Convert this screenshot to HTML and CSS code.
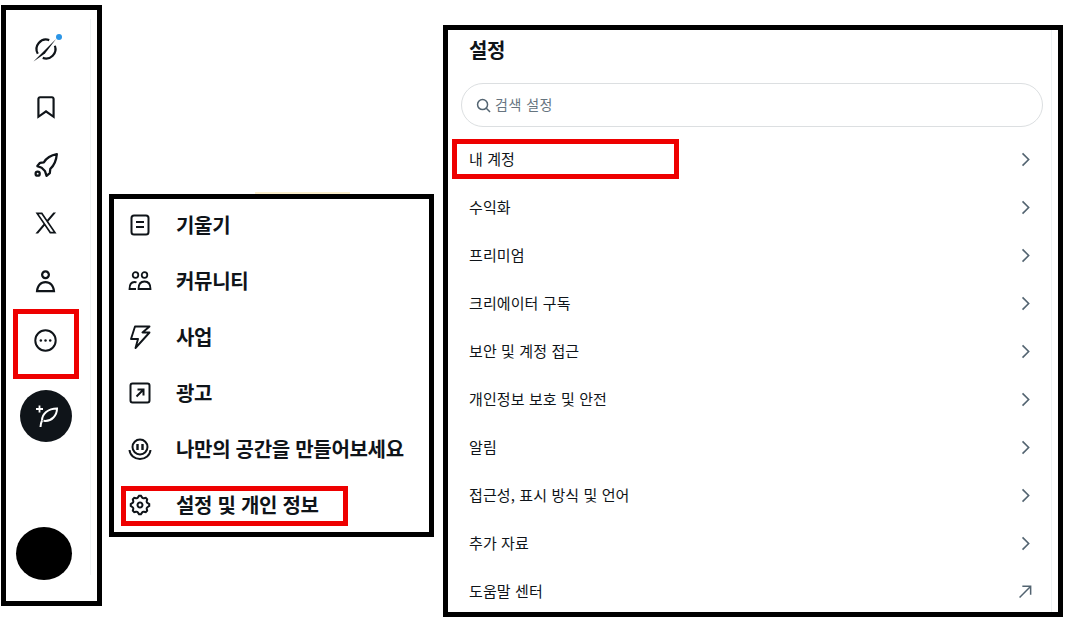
FILE: index.html
```html
<!DOCTYPE html>
<html lang="ko">
<head>
  <meta charset="UTF-8" />
  <title>설정</title>
  <link rel="stylesheet" href="styles.css">
</head>
<body>
  <div class="page">

    <nav class="panel rail-panel">
      <div class="rail">
        <div class="rail-item">
          <svg viewBox="0 0 32 32" width="32" height="32" fill="none" stroke="#0f1419" stroke-width="2.200">
            <path d="M24.900 13.750A9.500 9.500 0 0 1 12.750 25.900"/>
            <path d="M7.800 21.750A9.500 9.500 0 0 1 19.250 8.100"/>
            <path d="M3.500 29.500L26 7 15 21.500z" fill="#0f1419" stroke="none"/>
            <circle cx="29" cy="5" r="3" fill="#2b95e6" stroke="none"/>
          </svg>
        </div>
        <div class="rail-item">
          <svg viewBox="0 0 24 24" width="26" height="26" fill="#0f1419"><path d="M4 4.500C4 3.120 5.120 2 6.500 2h11C18.880 2 20 3.120 20 4.500v18.440l-8-5.710-8 5.710V4.500zM6.500 4c-.276 0-.5.220-.5.500v14.560l6-4.290 6 4.290V4.500c0-.280-.224-.5-.5-.5h-11z"/></svg>
        </div>
        <div class="rail-item">
          <svg viewBox="0 0 24 24" width="26" height="26" fill="none" stroke="#0f1419" stroke-width="2.100" stroke-linejoin="round">
            <path d="M22 2c-5.500 1-9.500 3.500-12 7.500L6.500 10 4 13l4 1.500 3 3L12.500 22l3-2.500.5-4C19.500 12.500 21.500 7.500 22 2z"/>
            <circle cx="4.300" cy="20" r="1.900"/>
          </svg>
        </div>
        <div class="rail-item">
          <svg viewBox="0 0 24 24" width="26" height="26" fill="#0f1419"><path d="M21.742 21.750l-7.563-11.179 7.056-8.321h-2.456l-5.691 6.714-4.540-6.714H2.359l7.290 10.776L2.250 21.750h2.456l6.035-7.118 4.818 7.118h6.191-.008zM7.739 3.818L18.810 20.182h-2.447L5.290 3.818h2.447z"/></svg>
        </div>
        <div class="rail-item">
          <svg viewBox="0 0 24 24" width="27" height="27" fill="#0f1419"><path d="M5.651 19.500h12.698c-.337-1.800-1.023-3.210-1.945-4.190C15.318 14.160 13.838 13.500 12 13.500s-3.317.660-4.404 1.810c-.922.980-1.608 2.390-1.945 4.190zm.486-5.560C7.627 12.360 9.648 11.500 12 11.500s4.373.860 5.863 2.440c1.477 1.580 2.366 3.800 2.632 6.460l.110 1.100H3.395l.110-1.100c.266-2.660 1.155-4.880 2.632-6.460zM12 4c-1.105 0-2 .900-2 2s.895 2 2 2 2-.900 2-2-.895-2-2-2zM8 6c0-2.210 1.791-4 4-4s4 1.790 4 4-1.791 4-4 4-4-1.790-4-4z"/></svg>
        </div>
        <div class="rail-item">
          <svg viewBox="0 0 24 24" width="25" height="25" fill="#0f1419">
            <circle cx="12" cy="12" r="9.800" fill="none" stroke="#0f1419" stroke-width="1.900"/>
            <circle cx="7.500" cy="12" r="1.200"/><circle cx="12" cy="12" r="1.200"/><circle cx="16.500" cy="12" r="1.200"/>
          </svg>
          <span class="mark mark-more"></span>
        </div>
        <div class="compose">
          <svg viewBox="0 0 24 24" width="24" height="24" fill="none" stroke="#fff" stroke-width="2">
            <path d="M8 16.500C8 10 14 4.500 23 4.500 23 11 18 18 9.500 16.800"/>
            <path d="M6.500 23C6.800 20 7.300 18 8 16.500"/>
            <path d="M5.500 1.500v7M2 5h7" stroke-width="1.800"/>
          </svg>
        </div>
        <div class="avatar"></div>
      </div>
    </nav>

    <div class="panel menu-panel">
      <div class="menu-item">
        <svg viewBox="0 0 24 24" width="24" height="24" fill="none" stroke="#0f1419" stroke-width="2"><rect x="3.500" y="2.500" width="17" height="19" rx="2.500"/><path d="M8 9h8M8 14h8"/></svg>
        <span class="menu-name">기울기</span>
      </div>
      <div class="menu-item">
        <svg viewBox="0 0 24 24" width="24" height="24" fill="none" stroke="#0f1419" stroke-width="1.800"><circle cx="7.500" cy="6" r="2.800"/><circle cx="16.500" cy="6" r="2.800"/><path d="M8 20H1.500c0-4 1.500-7 5-7 1 0 1.500.2 2 .5"/><path d="M10.500 20c0-4.500 2-7.500 6-7.500s6 3 6 7.500z"/></svg>
        <span class="menu-name">커뮤니티</span>
      </div>
      <div class="menu-item">
        <svg viewBox="0 0 24 24" width="24" height="24" fill="none" stroke="#0f1419" stroke-width="1.900" stroke-linejoin="round"><path d="M7 1.500h14.500l-7 6h7L7.500 23l2.500-9H3z"/></svg>
        <span class="menu-name">사업</span>
      </div>
      <div class="menu-item">
        <svg viewBox="0 0 24 24" width="24" height="24" fill="none" stroke="#0f1419" stroke-width="2"><rect x="2.500" y="2.500" width="19" height="19" rx="2"/><path d="M8.500 15.500l7-7M9.500 8.500h6v6"/></svg>
        <span class="menu-name">광고</span>
      </div>
      <div class="menu-item">
        <svg viewBox="0 0 24 24" width="24" height="24" fill="none" stroke="#0f1419" stroke-width="2"><circle cx="12" cy="10" r="7.500"/><path d="M1.500 13c.5 5.500 5 9 10.500 9s10-3.500 10.500-9"/><path d="M9.500 7v6M14.500 7v6" stroke-width="2.400"/></svg>
        <span class="menu-name">나만의 공간을 만들어보세요</span>
      </div>
      <div class="menu-item">
        <svg viewBox="0 0 24 24" width="24" height="24" fill="#0f1419"><path d="M10.540 1.750h2.920l1.570 2.360c.110.170.320.250.530.210l2.530-.590 2.170 2.170-.580 2.540c-.050.200.040.410.210.530l2.360 1.570v2.920l-2.360 1.570c-.170.120-.260.330-.210.530l.580 2.540-2.170 2.170-2.530-.590c-.210-.040-.420.040-.530.210l-1.570 2.360h-2.920l-1.580-2.360c-.110-.170-.320-.250-.520-.210l-2.540.590-2.170-2.170.580-2.540c.050-.200-.030-.410-.210-.530l-2.350-1.570v-2.920L4.100 8.970c.180-.120.260-.330.210-.530L3.730 5.900 5.900 3.730l2.540.590c.200.040.410-.040.520-.210l1.580-2.360zm1.070 2l-.980 1.470C10.050 6.080 9 6.500 7.990 6.270l-1.460-.340-.600.600.330 1.470c.240 1.010-.180 2.070-1.050 2.640l-1.460.980v.780l1.460.980c.870.570 1.290 1.630 1.050 2.640l-.330 1.470.600.600 1.460-.340c1.010-.230 2.060.190 2.640 1.050l.980 1.470h.780l.970-1.470c.580-.860 1.630-1.280 2.650-1.050l1.450.340.610-.600-.340-1.470c-.230-1.010.180-2.070 1.050-2.640l1.470-.980v-.780l-1.470-.980c-.870-.570-1.280-1.630-1.050-2.640l.340-1.470-.610-.600-1.450.340c-1.020.230-2.070-.190-2.650-1.050l-.970-1.470h-.780zM12 10.500c-.830 0-1.500.670-1.500 1.500s.670 1.500 1.500 1.500c.820 0 1.500-.670 1.500-1.500s-.680-1.500-1.500-1.500zM8.500 12c0-1.930 1.560-3.500 3.500-3.500 1.930 0 3.500 1.570 3.500 3.500s-1.570 3.500-3.500 3.500c-1.940 0-3.500-1.570-3.500-3.500z"/></svg>
        <span class="menu-name">설정 및 개인 정보</span>
        <span class="mark mark-settings"></span>
      </div>
    </div>

    <section class="panel settings-panel">
      <div class="settings">
        <h2>설정</h2>
        <div class="search">
          <svg viewBox="0 0 24 24" width="15" height="15" fill="none" stroke="#536471" stroke-width="2.400"><circle cx="10.500" cy="10.500" r="8"/><path d="M16.500 16.500l6 6"/></svg>
          <span>검색 설정</span>
        </div>
        <div class="setting-list">
          <div class="setting-row">
            <span class="setting-name">내 계정</span>
            <svg class="chevron" viewBox="0 0 24 24" width="19" height="19"><path d="M14.586 12L7.543 4.960l1.414-1.420L17.414 12l-8.457 8.460-1.414-1.420L14.586 12z"/></svg>
            <span class="mark mark-account"></span>
          </div>
          <div class="setting-row">
            <span class="setting-name">수익화</span>
            <svg class="chevron" viewBox="0 0 24 24" width="19" height="19"><path d="M14.586 12L7.543 4.960l1.414-1.420L17.414 12l-8.457 8.460-1.414-1.420L14.586 12z"/></svg>
          </div>
          <div class="setting-row">
            <span class="setting-name">프리미엄</span>
            <svg class="chevron" viewBox="0 0 24 24" width="19" height="19"><path d="M14.586 12L7.543 4.960l1.414-1.420L17.414 12l-8.457 8.460-1.414-1.420L14.586 12z"/></svg>
          </div>
          <div class="setting-row">
            <span class="setting-name">크리에이터 구독</span>
            <svg class="chevron" viewBox="0 0 24 24" width="19" height="19"><path d="M14.586 12L7.543 4.960l1.414-1.420L17.414 12l-8.457 8.460-1.414-1.420L14.586 12z"/></svg>
          </div>
          <div class="setting-row">
            <span class="setting-name">보안 및 계정 접근</span>
            <svg class="chevron" viewBox="0 0 24 24" width="19" height="19"><path d="M14.586 12L7.543 4.960l1.414-1.420L17.414 12l-8.457 8.460-1.414-1.420L14.586 12z"/></svg>
          </div>
          <div class="setting-row">
            <span class="setting-name">개인정보 보호 및 안전</span>
            <svg class="chevron" viewBox="0 0 24 24" width="19" height="19"><path d="M14.586 12L7.543 4.960l1.414-1.420L17.414 12l-8.457 8.460-1.414-1.420L14.586 12z"/></svg>
          </div>
          <div class="setting-row">
            <span class="setting-name">알림</span>
            <svg class="chevron" viewBox="0 0 24 24" width="19" height="19"><path d="M14.586 12L7.543 4.960l1.414-1.420L17.414 12l-8.457 8.460-1.414-1.420L14.586 12z"/></svg>
          </div>
          <div class="setting-row">
            <span class="setting-name">접근성, 표시 방식 및 언어</span>
            <svg class="chevron" viewBox="0 0 24 24" width="19" height="19"><path d="M14.586 12L7.543 4.960l1.414-1.420L17.414 12l-8.457 8.460-1.414-1.420L14.586 12z"/></svg>
          </div>
          <div class="setting-row">
            <span class="setting-name">추가 자료</span>
            <svg class="chevron" viewBox="0 0 24 24" width="19" height="19"><path d="M14.586 12L7.543 4.960l1.414-1.420L17.414 12l-8.457 8.460-1.414-1.420L14.586 12z"/></svg>
          </div>
          <div class="setting-row">
            <span class="setting-name">도움말 센터</span>
            <svg viewBox="0 0 24 24" width="19" height="19" fill="none" stroke="#536471" stroke-width="1.900"><path d="M4.500 19.500L18 6M8 5.500h10.500V16"/></svg>
          </div>
        </div>
      </div>
    </section>

  </div>
</body>
</html>
```

FILE: styles.css
```css
* {
  margin: 0;
  padding: 0;
  box-sizing: border-box;
  font-family: "Noto Sans CJK KR", "Liberation Sans", sans-serif;
}

body {
  background: #fff;
  color: #0f1419;
  overflow: hidden;
}

.page {
  display: flex;
  align-items: flex-start;
  padding-left: 1px;
  height: 618px;
}

.panel {
  flex: none;
  border: 5px solid #000;
  background: #fff;
}

svg {
  display: block;
  flex: none;
}

.mark {
  position: absolute;
  border: 5px solid #ee0000;
}

/* left icon rail */
.rail-panel {
  width: 101px;
  height: 601px;
  margin-top: 5px;
  padding-top: 9px;
}

.rail {
  width: 85px;
  height: 556px;
  padding-right: 5px;
  border-right: 1px solid #eff3f4;
  display: flex;
  flex-direction: column;
  align-items: center;
}

.rail-item {
  position: relative;
  flex: none;
  width: 100%;
  height: 58.4px;
  display: flex;
  align-items: center;
  justify-content: center;
}

.mark-more {
  left: 7px;
  top: -2px;
  width: 66px;
  height: 70px;
}

.compose {
  flex: none;
  width: 52px;
  height: 52px;
  margin-top: 20.6px;
  border-radius: 50%;
  background: #0f1419;
  display: flex;
  align-items: center;
  justify-content: center;
}

.avatar {
  flex: none;
  width: 56px;
  height: 53px;
  margin: 85px 4px 0 0;
  border-radius: 50%;
  background: #000;
}

/* more menu */
.menu-panel {
  position: relative;
  width: 325px;
  height: 343px;
  margin: 194px 0 0 7px;
  display: flex;
  flex-direction: column;
  gap: 4px;
}

.menu-panel::before {
  content: "";
  position: absolute;
  left: 141px;
  top: -7px;
  width: 95px;
  height: 2px;
  background: #fbeecb;
}

.menu-item {
  position: relative;
  height: 52px;
  padding-left: 14px;
  display: flex;
  align-items: center;
  gap: 24px;
  font-size: 20px;
  font-weight: 700;
  letter-spacing: -0.3px;
}

.menu-name {
  margin-bottom: 2px;
}

.mark-settings {
  left: 7px;
  top: 7px;
  width: 227px;
  height: 40px;
}

/* settings column */
.settings-panel {
  width: 620px;
  height: 592px;
  margin: 25px 0 0 9px;
}

.settings {
  width: 604px;
  height: 100%;
  border-right: 1px solid #eff3f4;
}

.settings h2 {
  height: 42px;
  padding: 5px 0 0 21px;
  font-size: 20px;
  font-weight: 700;
  line-height: 30px;
  letter-spacing: -0.5px;
}

.search {
  height: 44px;
  margin: 11px 8px 0 13px;
  padding-left: 14px;
  border: 1px solid #dcdfe1;
  border-radius: 22px;
  display: flex;
  align-items: center;
  gap: 4px;
  color: #66747f;
  font-size: 14px;
  letter-spacing: 0.5px;
}

.search span {
  margin-bottom: 3px;
}

.setting-list {
  margin-top: 8px;
}

.setting-row {
  position: relative;
  height: 48px;
  padding: 0 16px 0 21px;
  display: flex;
  align-items: center;
  justify-content: space-between;
  font-size: 15px;
  letter-spacing: 0.1px;
}

.setting-name {
  margin-bottom: 2px;
}

.chevron {
  fill: #536471;
}

.mark-account {
  left: 4px;
  top: 4px;
  width: 227px;
  height: 40px;
}
```
